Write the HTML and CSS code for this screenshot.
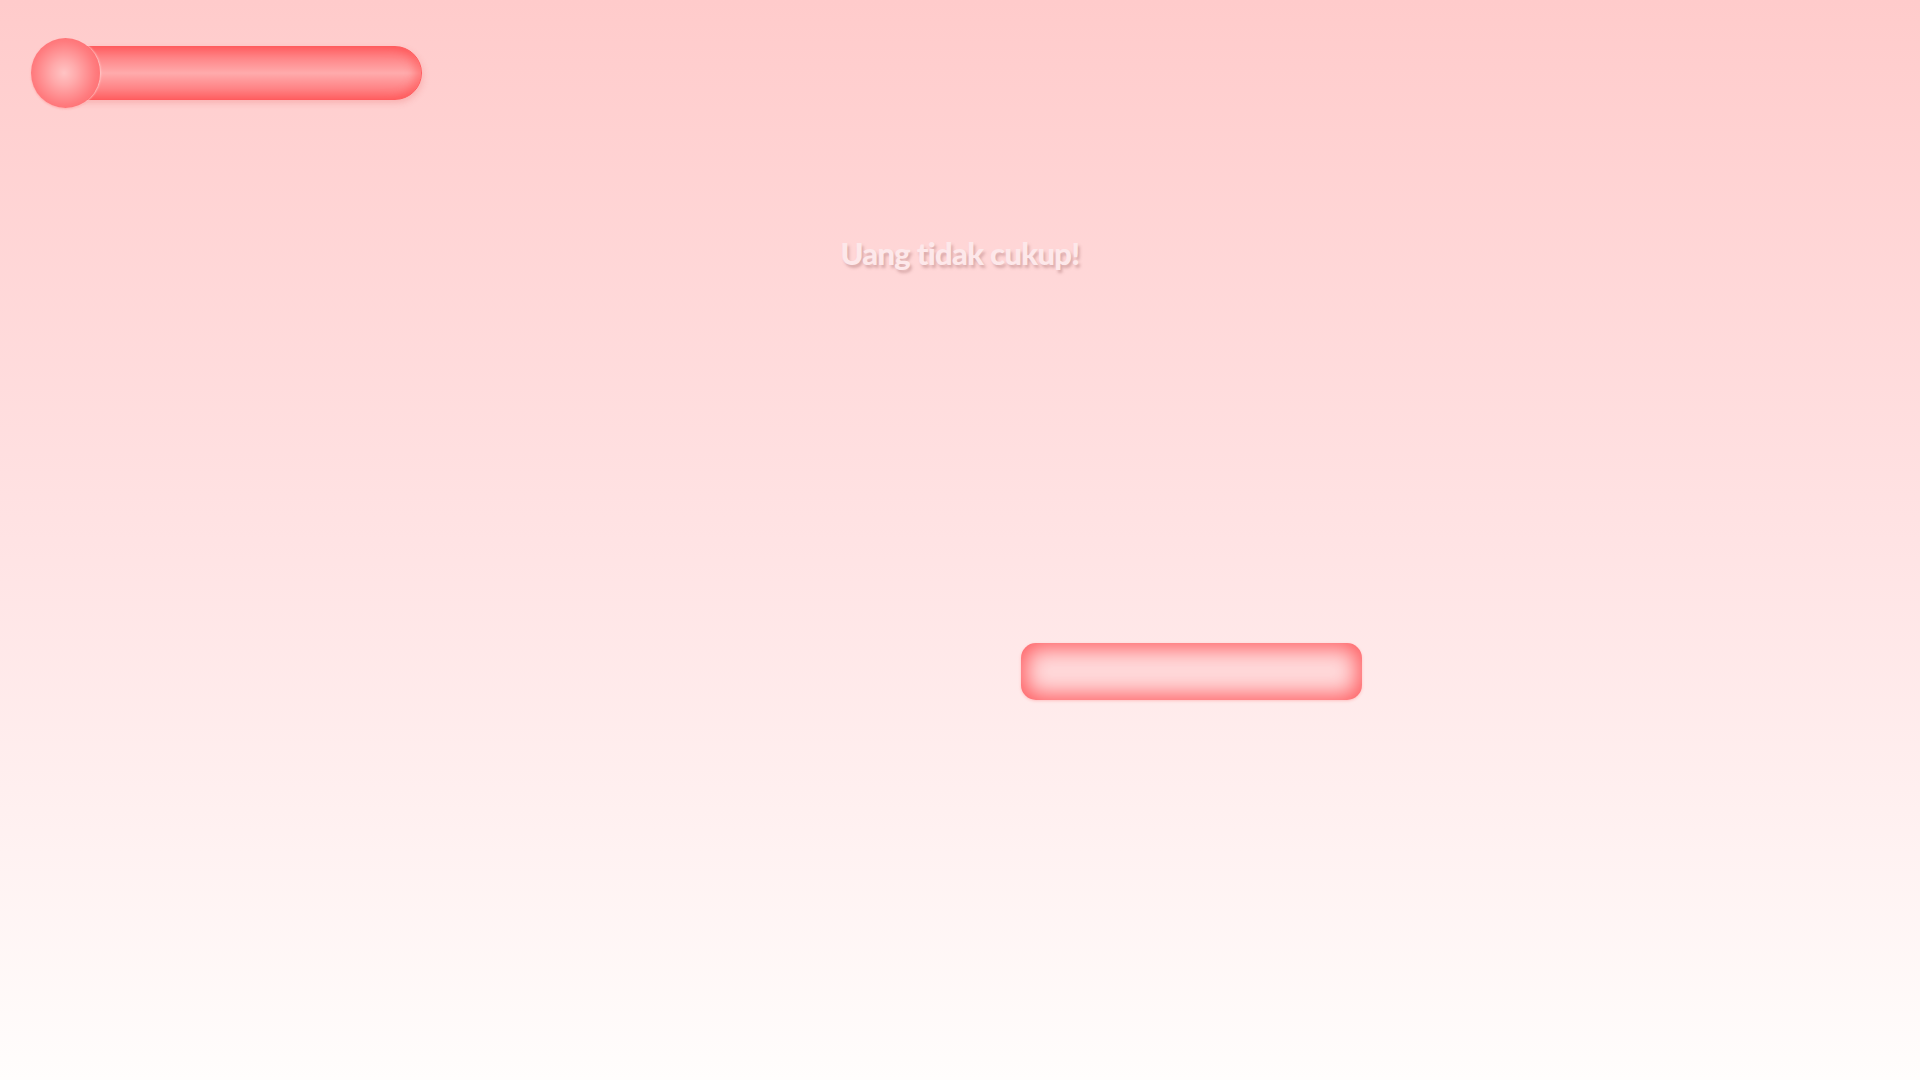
FILE: index.html
```html
<!DOCTYPE html>
<html lang="id">
<head>
<meta charset="utf-8">
<title>Uang tidak cukup</title>
<link rel="stylesheet" href="styles.css">
</head>
<body>
<div class="screen">
  <header class="hud">
    <div class="meter">
      <div class="meter-knob"></div>
      <div class="meter-bar"></div>
    </div>
  </header>
  <p class="notice">Uang tidak cukup!</p>
  <div class="actions">
    <button class="action-btn" type="button"></button>
  </div>
</div>
</body>
</html>
```
FILE: styles.css
```css
html, body {
  margin: 0;
  padding: 0;
  height: 100%;
}
body {
  background: linear-gradient(to bottom, #ffcbcb 0%, #ffe3e4 50%, #fffdfc 100%);
  font-family: "Lato", "Liberation Sans", sans-serif;
  overflow: hidden;
}
.screen {
  display: flex;
  flex-direction: column;
  height: 100%;
}
.hud {
  display: flex;
  padding: 38px 0 0 31px;
}
.meter {
  display: flex;
  align-items: center;
}
.meter-knob {
  position: relative;
  z-index: 1;
  width: 69px;
  height: 70px;
  border-radius: 50%;
  background: radial-gradient(circle at 48% 50%, #ffc4c4 0%, #ffaaab 25%, #ff7c7f 62%, #ff5a5d 100%);
  box-shadow: 1px 0 2px rgba(255, 210, 210, 0.9), 0 1px 2px rgba(255, 80, 80, 0.3);
}
.meter-bar {
  width: 360px;
  height: 54px;
  margin-left: -38px;
  box-sizing: border-box;
  border-radius: 0 27px 27px 0;
  border: 1px solid #ff5c5e;
  background: linear-gradient(to bottom, #ff6669 0%, #ff8a8c 25%, #ffabac 50%, #ff8a8c 75%, #ff686a 100%);
  box-shadow: inset -6px 0 10px rgba(255, 70, 72, 0.45), 1px 3px 6px rgba(230, 90, 90, 0.25);
}
.notice {
  margin: 130px 0 0;
  text-align: center;
  font-size: 31px;
  line-height: 1;
  font-weight: 900;
  color: #fde8ea;
  letter-spacing: -0.7px;
  text-shadow: 2px 3px 3px rgba(150, 90, 90, 0.35);
}
.actions {
  display: flex;
  padding-left: 1021px;
  margin-top: 374px;
}
.action-btn {
  width: 341px;
  height: 57px;
  border: none;
  border-radius: 15px;
  background: #ffdadb;
  box-shadow: inset 0 0 22px 5px #ff5a5e, 0 1px 3px rgba(255, 100, 100, 0.3);
  padding: 0;
  cursor: pointer;
}
```
